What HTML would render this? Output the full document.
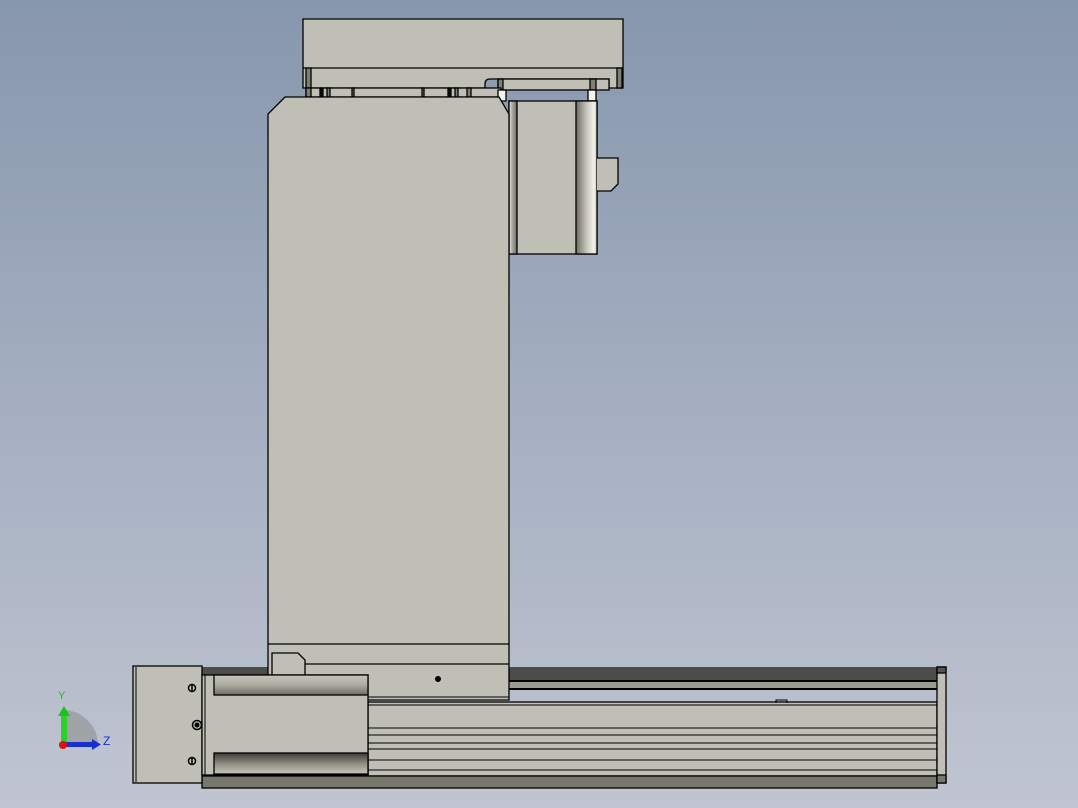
<!DOCTYPE html>
<html><head><meta charset="utf-8"><style>
html,body{margin:0;padding:0;width:1078px;height:808px;overflow:hidden}
body{background:linear-gradient(#8797ad 0%,#a7b1c2 55%,#c0c5d1 100%)}
svg{position:absolute;left:0;top:0}
</style></head><body>
<svg width="1078" height="808" viewBox="0 0 1078 808" xmlns="http://www.w3.org/2000/svg">
<defs>
<linearGradient id="cylH" x1="0" x2="1" y1="0" y2="0"><stop offset="0" stop-color="#6c6c60"/><stop offset=".5" stop-color="#c4c4ba"/><stop offset=".85" stop-color="#f2f2ea"/><stop offset="1" stop-color="#c9c9bf"/></linearGradient>
<linearGradient id="cylL" x1="0" x2="1"><stop offset="0" stop-color="#e8e8e0"/><stop offset=".4" stop-color="#aaaaa0"/><stop offset="1" stop-color="#6a6a5e"/></linearGradient>
<linearGradient id="railTop" x1="0" x2="0" y1="0" y2="1"><stop offset="0" stop-color="#c6c6bc"/><stop offset=".5" stop-color="#aaaaa0"/><stop offset="1" stop-color="#6e6e64"/></linearGradient>
<linearGradient id="railBot" x1="0" x2="0" y1="0" y2="1"><stop offset="0" stop-color="#3c3c36"/><stop offset=".5" stop-color="#8c8c82"/><stop offset="1" stop-color="#c6c6bc"/></linearGradient>
</defs>
<g stroke="#000" stroke-width="1.3" fill="#bfbfb6">
<!-- top plate -->
<path d="M303,19 H623 V88 H609 V79 H498 V79 H490 Q485,79 485,84 V88 H303 Z"/>
<line x1="303" y1="68" x2="623" y2="68"/>
<rect x="306" y="68" width="5" height="20" fill="#7d7d72"/>
<rect x="617" y="68" width="5" height="20" fill="#7d7d72"/>
<rect x="498" y="79" width="111" height="11"/>
<rect x="498" y="79" width="5" height="11" fill="#7d7d72"/>
<rect x="590" y="79" width="6" height="11" fill="#7d7d72"/>
<!-- spacers -->
<rect x="306" y="88" width="195" height="9"/>
<rect x="306" y="88" width="5" height="9" fill="#7d7d72"/>
<rect x="320" y="88" width="3" height="9" fill="#111"/>
<rect x="327" y="88" width="3" height="9" fill="#7d7d72"/>
<rect x="352" y="88" width="2" height="9" fill="#7d7d72"/>
<rect x="422" y="88" width="2" height="9" fill="#7d7d72"/>
<rect x="448" y="88" width="3" height="9" fill="#111"/>
<rect x="455" y="88" width="3" height="9" fill="#7d7d72"/>
<rect x="467" y="88" width="4" height="9" fill="#7d7d72"/>
<rect x="498" y="90" width="8" height="11" fill="#f4f4ee"/>
<rect x="588" y="90" width="8" height="11" fill="#f4f4ee"/>
<!-- motor block -->
<rect x="509" y="101" width="88" height="153"/>
<rect x="509" y="101" width="8" height="153" fill="url(#cylL)"/>
<rect x="576" y="101" width="21" height="153" fill="url(#cylH)"/>
<path d="M597,158 H618 V184 L611,191 H597"/>
<!-- top rails (behind) -->
<rect x="202" y="667" width="735" height="22" fill="#4c4c48" stroke="none"/>
<rect x="202" y="682" width="735" height="6" fill="#9b9b90" stroke="none"/>
<line x1="202" y1="681" x2="937" y2="681" stroke-width="2"/>
<line x1="202" y1="689" x2="937" y2="689" stroke-width="2"/>
<!-- column -->
<path d="M285,97 H499 L509,114 V700 H268 V114 Z"/>
<line x1="268" y1="644" x2="509" y2="644"/>
<line x1="305" y1="664" x2="509" y2="664"/>
<line x1="368" y1="697" x2="509" y2="697" stroke-width="1"/>
<path d="M272,675 V653 H298 L305,660 V675" fill="#bfbfb6"/>
<circle cx="438" cy="679" r="3" fill="#000" stroke="none"/>
<!-- body -->
<rect x="368" y="702" width="569" height="74"/>
<g stroke-width="1">
<line x1="368" y1="705" x2="937" y2="705"/>
<line x1="368" y1="728" x2="937" y2="728"/>
<line x1="368" y1="735" x2="937" y2="735"/>
<line x1="368" y1="743" x2="937" y2="743"/>
<line x1="368" y1="749" x2="937" y2="749"/>
<line x1="368" y1="760" x2="937" y2="760"/>
<line x1="368" y1="770" x2="937" y2="770"/>
</g>
<path d="M776,703 V700 H787 V703" fill="none" stroke-width="1"/>
<rect x="202" y="776" width="735" height="12" fill="#77776b"/>
<!-- end cap -->
<rect x="937" y="667" width="9" height="116" fill="#bfbfb6"/>
<rect x="937" y="667" width="9" height="6" fill="#555"/>
<rect x="937" y="775" width="9" height="8" fill="#77776b"/>
<!-- end block + carriage -->
<rect x="133" y="666" width="69" height="117"/>
<line x1="136" y1="667" x2="136" y2="782" stroke-width="1"/>
<rect x="202" y="675" width="166" height="100"/>
<rect x="214" y="675" width="154" height="20" fill="url(#railTop)"/>
<rect x="214" y="753" width="154" height="21" fill="url(#railBot)"/>
<line x1="205" y1="675" x2="205" y2="775" stroke-width="1"/>
</g>
<g fill="none" stroke="#000" stroke-width="1.5">
<circle cx="192" cy="688" r="3.5"/><line x1="192" y1="684" x2="192" y2="692"/>
<circle cx="192" cy="761" r="3.5"/><line x1="192" y1="757" x2="192" y2="765"/>
<circle cx="197" cy="725" r="4.5"/>
</g>
<circle cx="197" cy="725" r="2.5" fill="#000"/>
<!-- triad -->
<path d="M63,745 V710 A35,35 0 0 1 98,745 Z" fill="#9a9ca0" opacity=".8"/>
<rect x="61" y="714" width="6" height="31" fill="#2bd02b"/>
<path d="M58,716 L64,706 L70,716 Z" fill="#1ec01e"/>
<rect x="63" y="742" width="30" height="5" fill="#1a2fd0"/>
<path d="M92,739 L101,744.5 L92,750 Z" fill="#1a2fd0"/>
<circle cx="63" cy="745" r="4" fill="#e01010"/>
<text x="58" y="699" font-family="Liberation Sans, sans-serif" font-size="11" fill="#1fbf1f">Y</text>
<text x="103" y="745" font-family="Liberation Sans, sans-serif" font-size="12" fill="#1a2fd0">Z</text>
</svg>
</body></html>
